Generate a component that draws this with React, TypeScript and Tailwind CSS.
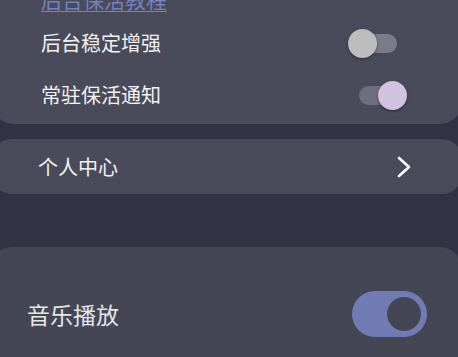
import React from "react";

const font = { fontFamily: '"Noto Sans CJK SC", "Noto Sans", sans-serif' };

export default function App() {
  return (
    <div
      className="w-[458px] h-[357px] overflow-hidden bg-[#313244] flex flex-col"
      style={font}
    >
      {/* Card 1 */}
      <div className="ml-[-8px] w-[470px] mt-[-13px] bg-[#4a4b5a] rounded-b-[22px] flex flex-col pb-[3px] shrink-0">
        <div className="pl-[49px] h-[25px] flex items-center">
          <span className="text-[21px] leading-[25px] text-[#7480c2] underline underline-offset-[3px] decoration-[1px]">
            后台保活教程
          </span>
        </div>
        <div className="h-[5px]" />
        <div className="h-[52px] flex items-center justify-between pl-[49px] pr-[65px]">
          <span className="text-[20px] text-[#f2f2f2]">后台稳定增强</span>
          <div className="relative w-[49px] h-[29px]">
            <div className="absolute right-0 top-[5px] h-[19px] w-[42px] rounded-full bg-[#7b7b8b]" />
            <div className="absolute left-0 top-0 w-[29px] h-[29px] rounded-full bg-[#bdbdbd] shadow-[0_1px_3px_rgba(0,0,0,0.45)]" />
          </div>
        </div>
        <div className="h-[52px] flex items-center justify-between pl-[49px] pr-[55px]">
          <span className="text-[20px] text-[#f2f2f2]">常驻保活通知</span>
          <div className="relative w-[48px] h-[29px]">
            <div className="absolute left-0 top-[5px] h-[19px] w-[42px] rounded-full bg-[#6f6e81]" />
            <div className="absolute right-0 top-0 w-[29px] h-[29px] rounded-full bg-[#cfc3df] shadow-[0_1px_3px_rgba(0,0,0,0.45)]" />
          </div>
        </div>
      </div>

      {/* Card 2 */}
      <div className="ml-[-8px] w-[470px] mt-[15px] h-[55px] bg-[#4a4b5a] rounded-[20px] flex items-center justify-between pl-[46px] pr-[51px] shrink-0">
        <span className="text-[20px] text-[#f2f2f2]">个人中心</span>
        <svg width="14" height="22" viewBox="0 0 14 22" fill="none">
          <polyline
            points="2,2 12,11 2,20"
            stroke="#ffffff"
            strokeWidth="2.6"
            strokeLinecap="round"
            strokeLinejoin="round"
          />
        </svg>
      </div>

      {/* Card 3 */}
      <div className="ml-[-10px] w-[472px] mt-[53px] flex-1 bg-[#454654] rounded-t-[22px] flex flex-col shrink-0">
        <div className="h-[134px] flex items-center justify-between pl-[37px] pr-[35px]">
          <span className="text-[23px] text-[#e6e6ea]">音乐播放</span>
          <div className="w-[75px] h-[46px] rounded-full bg-[#717cb4] flex items-center justify-end pr-[6px]">
            <div className="w-[34px] h-[34px] rounded-full bg-[#454654]" />
          </div>
        </div>
      </div>
    </div>
  );
}
